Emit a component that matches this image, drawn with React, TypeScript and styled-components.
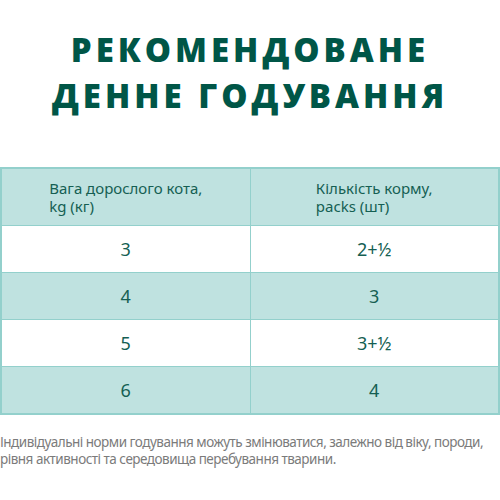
import React from 'react'
import styled, { createGlobalStyle } from 'styled-components'

const GlobalStyle = createGlobalStyle`
  html, body {
    margin: 0;
    padding: 0;
    background: #ffffff;
  }
  body {
    font-family: 'Noto Sans', 'Open Sans', sans-serif;
  }
`

const Page = styled.div`
  width: 500px;
  height: 500px;
  overflow: hidden;
`

const Title = styled.h1`
  margin: 0;
  padding-top: 27px;
  height: 167px;
  box-sizing: border-box;
  text-align: center;
  font-family: 'Open Sans', sans-serif;
  font-weight: 800;
  font-size: 33px;
  line-height: 46px;
  letter-spacing: 4px;
  color: #005647;
`

const Table = styled.table`
  width: 500px;
  border-collapse: collapse;
  table-layout: fixed;
  border: 2px solid #93d0cc;
`

const Row = styled.tr<{ $shaded?: boolean }>`
  background: ${(p) => (p.$shaded ? '#bfe2e0' : '#ffffff')};
`

const HeadCell = styled.th`
  height: 56px;
  padding: 0;
  border: 1px solid #93d0cc;
  text-align: center;
  vertical-align: middle;
  font-weight: 400;
  font-size: 15px;
  line-height: 18px;
  color: #155f53;
`

const HeadText = styled.span`
  display: inline-block;
  text-align: left;
`

const Cell = styled.td`
  height: 46px;
  padding: 0;
  border: 1px solid #93d0cc;
  text-align: center;
  vertical-align: middle;
  font-size: 18px;
  color: #155f53;
`

const Note = styled.p`
  margin: 19px 0 0;
  font-size: 13.5px;
  line-height: 17px;
  color: #7b7b7b;
  letter-spacing: -0.5px;
  white-space: nowrap;
`

const rows = [
  ['3', '2+½'],
  ['4', '3'],
  ['5', '3+½'],
  ['6', '4'],
]

export default function App() {
  return (
    <Page>
      <GlobalStyle />
      <Title>
        РЕКОМЕНДОВАНЕ
        <br />
        ДЕННЕ ГОДУВАННЯ
      </Title>
      <Table>
        <thead>
          <Row $shaded>
            <HeadCell>
              <HeadText>
                Вага дорослого кота,
                <br />
                kg (кг)
              </HeadText>
            </HeadCell>
            <HeadCell>
              <HeadText>
                Кількість корму,
                <br />
                packs (шт)
              </HeadText>
            </HeadCell>
          </Row>
        </thead>
        <tbody>
          {rows.map((r, i) => (
            <Row key={r[0]} $shaded={i % 2 === 1}>
              <Cell>{r[0]}</Cell>
              <Cell>{r[1]}</Cell>
            </Row>
          ))}
        </tbody>
      </Table>
      <Note>
        Індивідуальні норми годування можуть змінюватися, залежно від віку, породи,
        <br />
        рівня активності та середовища перебування тварини.
      </Note>
    </Page>
  )
}
